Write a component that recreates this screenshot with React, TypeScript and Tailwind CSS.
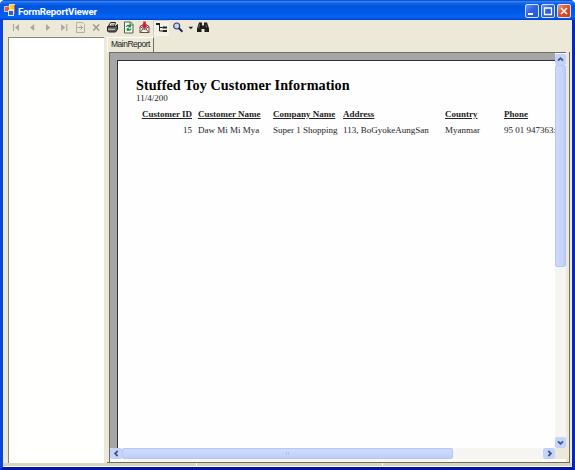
import type { ReactNode } from "react";

const ink = "#222222";

function Icon({ w = "w-[16px]", children }: { w?: string; children: ReactNode }) {
  return (
    <svg className={`${w} h-[14px] shrink-0`} viewBox="0 0 14 14" fill="none" aria-hidden="true">
      {children}
    </svg>
  );
}

function TitleBar() {
  return (
    <header className="flex h-[20px] shrink-0 items-center bg-[linear-gradient(180deg,#0831bd_0%,#3486f5_7%,#1269ec_15%,#0054dc_32%,#005be8_65%,#0563f6_85%,#0151dc_95%,#003cc0_100%)] pl-[4px] pr-[4px]">
      <svg className="h-[12px] w-[12px]" viewBox="0 0 12 12" aria-hidden="true">
        <path d="M0 2h6v6H0z" fill="#b9c8df" />
        <path d="M1 3h4v4H1z" fill="#e8553a" />
        <path d="M5 0h6v6H5z" fill="#f7e894" />
        <path d="M6 1h4v4H6z" fill="#f6c832" />
        <path d="M4 6h6v6H4z" fill="#dce6ef" />
        <path d="M5 7h4v4H5z" fill="#315fcf" />
        <path d="M10 1h1v9h-1z" fill="#d4574a" />
      </svg>
      <h1 className="ml-[2px] mt-[3px] flex-1 whitespace-nowrap font-['Roboto',sans-serif] text-[9.7px] font-bold leading-[12px] tracking-[-0.2px] text-white">
        FormReportViewer
      </h1>
      <div className="mt-[2px] flex gap-[2px]">
        <WindowButton kind="min" />
        <WindowButton kind="max" />
        <WindowButton kind="close" />
      </div>
    </header>
  );
}

function WindowButton({ kind }: { kind: "min" | "max" | "close" }) {
  const face = kind === "close" ? "bg-[linear-gradient(135deg,#f09a7d,#e2502a_45%,#c63f1e)]" : "bg-[linear-gradient(135deg,#6b98f5,#2f62df_45%,#2458d8)]";
  return (
    <button className={`h-[14px] w-[14px] rounded-[2px] border border-[#d5e0fb] ${face}`} aria-label={kind}>
      <svg className="h-[12px] w-[12px]" viewBox="0 0 12 12" aria-hidden="true" fill="none" stroke="#fff">
        {kind === "min" && <path d="M2 9h5" strokeWidth="2" />}
        {kind === "max" && <path d="M2 3h8M2.5 3v6.5h7V3" strokeWidth="1.3" />}
        {kind === "close" && <path d="M3 3l6 6M9 3L3 9" strokeWidth="1.6" />}
      </svg>
    </button>
  );
}

function Toolbar() {
  return (
    <div className="flex h-[17px] shrink-0 items-start pl-[5px]">
      <Icon>
        <path d="M4.5 4v7" stroke="#aaa89c" strokeWidth="1.2" />
        <path d="M10 4v7L6 7.5z" fill="#aaa89c" />
      </Icon>
      <Icon><path d="M9.2 4v7L5 7.5z" fill="#aaa89c" /></Icon>
      <Icon><path d="M5 4v7l4.2-3.5z" fill="#aaa89c" /></Icon>
      <Icon>
        <path d="M9.7 4v7" stroke="#aaa89c" strokeWidth="1.2" />
        <path d="M4.2 4v7l4-3.5z" fill="#aaa89c" />
      </Icon>
      <Icon>
        <path d="M3.5 2.5h6l2 2v8h-8z" stroke="#b3b1a3" />
        <path d="M4.5 7.5h5M7.5 5.5l2 2-2 2" stroke="#a19f92" />
      </Icon>
      <Icon><path d="M4.2 4.5l6 6M10.2 4.5l-6 6" stroke="#99978c" strokeWidth="1.4" /></Icon>
      <Icon>
        <path d="M5.5 2.5h5L9.5 6h-6z" fill="#f5f5ef" stroke={ink} />
        <path d="M2.5 6.5h8l2-2v5l-2 2.5h-7l-1-1z" fill="#5b5b57" stroke={ink} />
        <path d="M3 9.300h7" stroke="#d8d8cc" />
        <path d="M6 4.2h3" stroke="#777" />
      </Icon>
      <Icon>
        <path d="M3.5 2h6l2.5 2.5V13H3.5z" fill="#fff" stroke="#46634a" />
        <path d="M9 2v3h3" stroke="#46634a" />
        <path d="M5.500 7c.2-2 2.500-2 3.500-.8M9.300 4.800v2H7.300M10 8.500c-.2 2-2.500 2-3.500.8M6.200 10.800v-2h2" stroke="#16833a" strokeWidth="1.2" />
      </Icon>
      <Icon>
        <path d="M3 6.500l4.500-3 4.500 3v6H3z" fill="#f5f3e9" stroke="#6b4a4a" />
        <path d="M3 6.500l4.500 3 4.500-3M3 12.500l3-3.500M12 12.500l-3-3.500" stroke="#6b4a4a" />
        <path d="M7.500 9L4 5.300h2.200V1.500h2.600v3.800H11z" fill="#d01f2e" />
      </Icon>
      <div className="ml-px mr-px flex h-[16px] w-[16px] items-start justify-center border-l border-t border-[#d3cec0] bg-[#f4f2e8]">
        <Icon w="w-[14px]">
          <path d="M1 3h4" stroke={ink} strokeWidth="2" />
          <path d="M4.500 3v7h3M4.500 6.500h3" stroke={ink} />
          <path d="M7.500 6.500h4.500M7.500 10h4.500" stroke={ink} strokeWidth="2" />
        </Icon>
      </div>
      <Icon>
        <circle cx="5.7" cy="6" r="3" fill="#c2d4ed" stroke="#3c4278" strokeWidth="1.2" />
        <path d="M8 8.300l3.400 3.400" stroke="#25246c" strokeWidth="2" />
      </Icon>
      <Icon w="w-[10px]"><path d="M3.500 6.500h6.500L6.800 10z" fill={ink} /></Icon>
      <Icon w="w-[14px]">
        <path d="M3 2.500h3v3h2v-3h3l2 6v3.500H8.500v-3h-3v3H1V8.500z" fill="#1d1d1d" />
        <path d="M3.500 4.500l-1 4M10 4.500l.5 3" stroke="#8f8f87" strokeWidth=".7" />
      </Icon>
    </div>
  );
}

function Arrow({ d, side = false }: { d: string; side?: boolean }) {
  return (
    <div className={`${side ? "w-[12px]" : "w-full"} flex h-[11px] shrink-0 items-center justify-center rounded-[2px] border border-[#c3d2f8] bg-[#c4d4fc]`}>
      <svg className="h-[9px] w-[9px]" viewBox="0 0 10 10" fill="none" aria-hidden="true">
        <path d={d} stroke="#405585" strokeWidth="2" />
      </svg>
    </div>
  );
}

function Report() {
  return (
    <article className="min-w-0 flex-1 overflow-hidden whitespace-nowrap border-l border-t border-[#303030] bg-[#fefefe] pl-[18px] font-['Liberation_Serif',serif] text-[#242424]">
      <h2 className="mt-[16px] text-[14.2px] font-bold leading-[16px] tracking-[0.1px] text-black">Stuffed Toy Customer Information</h2>
      <p className="text-[9px] leading-[11px]">11/4/200</p>
      <div className="mt-[5px] grid w-[418px] grid-cols-[62px_75px_70px_102px_59px_50px] text-[9px] leading-[11px]">
        <b className="pr-[6px] text-right underline">Customer ID</b>
        <b className="underline">Customer Name</b>
        <b className="underline">Company Name</b>
        <b className="underline">Address</b>
        <b className="underline">Country</b>
        <b className="underline">Phone</b>
        <span className="mt-[5px] pr-[6px] text-right">15</span>
        <span className="mt-[5px]">Daw Mi Mi Mya</span>
        <span className="mt-[5px]">Super 1 Shopping</span>
        <span className="mt-[5px]">113, BoGyokeAungSan</span>
        <span className="mt-[5px]">Myanmar</span>
        <span className="mt-[5px]">95 01 947363:</span>
      </div>
    </article>
  );
}

export default function App() {
  return (
    <main className="flex h-[470px] w-[575px] flex-col overflow-hidden bg-white">
      <div className="flex min-h-0 flex-1 flex-col overflow-hidden rounded-t-[5px] bg-[#0831d9]">
        <TitleBar />
        <div className="flex min-h-0 flex-1 flex-col border-x-[3px] border-b-[3px] border-b-[#0019a0] border-l-[#0b45e0] border-r-[#0626bd] bg-[#ece9d8]">
          <Toolbar />
          <div className="flex min-h-0 flex-1">
            <aside className="ml-[5px] w-[96px] shrink-0 border-l border-t border-[#8b887b] bg-[#fffffd]" />
            <div className="ml-[3px] flex min-w-0 flex-1 flex-col pr-[2px]">
              <div className="flex h-[15px] shrink-0">
                <div className="w-[47px] whitespace-nowrap border-l border-r border-t border-l-white border-r-[#716f64] border-t-white pl-[3px] font-['Liberation_Sans',sans-serif] text-[8.5px] leading-[13px] tracking-[-0.5px] text-[#222]">
                  MainReport
                </div>
              </div>
              <div className="flex min-h-0 flex-1 flex-col border-b border-r border-[#716f64]">
                <div className="ml-[2px] mr-[3px] flex min-h-0 flex-1 flex-col border-l border-t border-[#716f64] bg-[#f5f4ef]">
                  <div className="flex min-h-0 flex-1">
                    <div className="flex min-w-0 flex-1 bg-[#a6a6a6] pl-[7px] pt-[7px]"><Report /></div>
                    <div className="flex w-[11px] shrink-0 flex-col bg-[#f6f5f1] pt-px">
                      <Arrow d="M2.2 6.3L5 3.5l2.8 2.8" />
                      <div className="h-[202px] rounded-[2px] border border-[#b5c7f2] bg-[linear-gradient(90deg,#cedafd,#c5d3fc_75%,#b9cbf5)]" />
                      <div className="flex-1" />
                      <Arrow d="M2.2 3.7L5 6.5l2.8-2.8" />
                    </div>
                  </div>
                  <div className="flex h-[11px] shrink-0 bg-[#f6f5f1]">
                    <Arrow side d="M6.3 2.2L3.5 5l2.8 2.8" />
                    <div className="flex w-[331px] items-center justify-center gap-px rounded-[2px] border border-[#b5c7f2] bg-[linear-gradient(180deg,#cedafd,#c5d3fc_75%,#b9cbf5)]">
                      <i className="h-[3px] w-px bg-[#aebfeb]" />
                      <i className="h-[3px] w-px bg-[#aebfeb]" />
                    </div>
                    <div className="flex-1" />
                    <Arrow side d="M3.7 2.2L6.5 5 3.7 7.8" />
                    <div className="w-[11px] bg-[#ece9d8]" />
                  </div>
                  <div className="h-[3px] shrink-0 bg-[#fbfaf5]" />
                </div>
              </div>
            </div>
          </div>
          <footer className="flex h-[4px] shrink-0 border-b border-white bg-[#d8d4bd] pl-[5px]">
            <div className="w-[189px] border-r border-white" />
            <div className="w-[186px] border-r border-white" />
          </footer>
        </div>
      </div>
    </main>
  );
}
